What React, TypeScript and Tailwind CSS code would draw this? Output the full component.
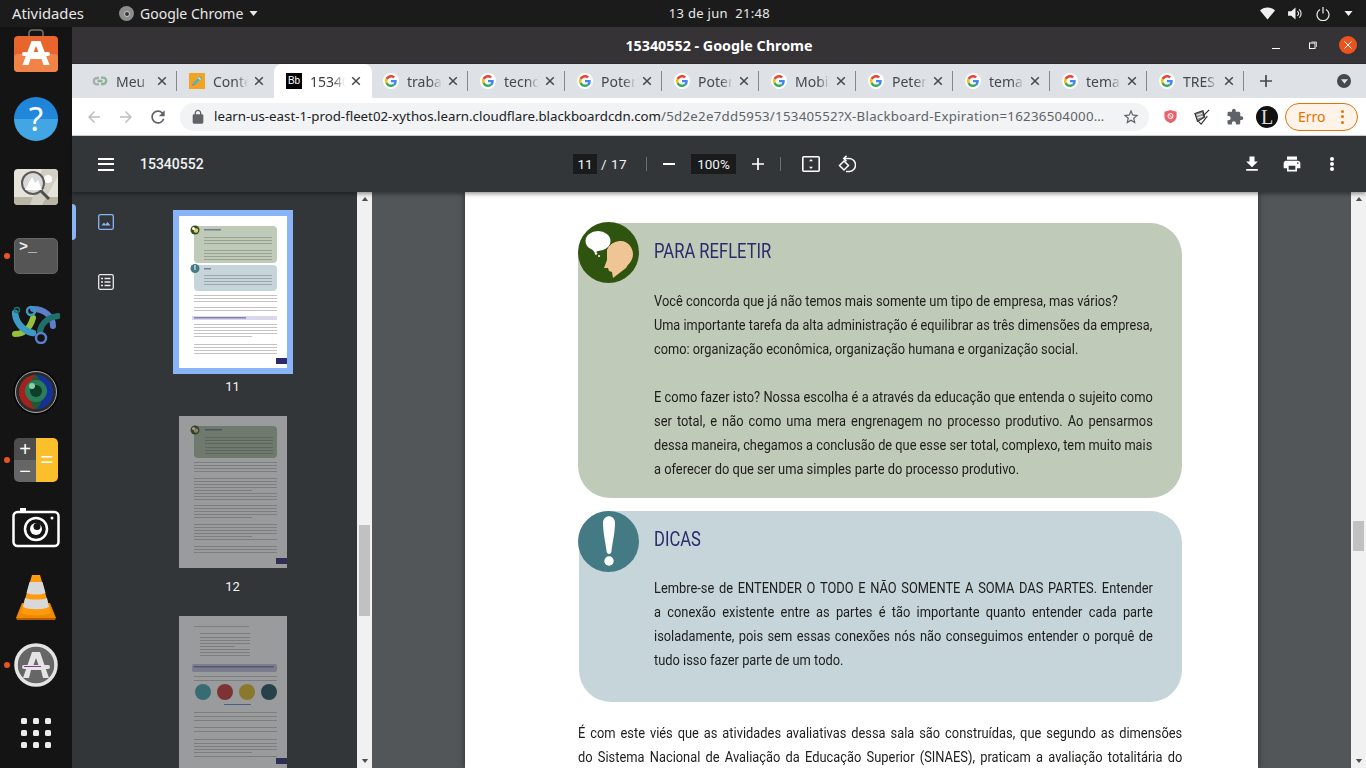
import React from "react";

const tabs = [
  { name: "Meu", icon: "link" },
  { name: "Conte", icon: "pencil" },
  { name: "15340", icon: "bb", active: true },
  { name: "trabal", icon: "g" },
  { name: "tecno", icon: "g" },
  { name: "Poten", icon: "g" },
  { name: "Poten", icon: "g" },
  { name: "Mobil", icon: "g" },
  { name: "Peter", icon: "g" },
  { name: "tema", icon: "g" },
  { name: "tema", icon: "g" },
  { name: "TRES", icon: "g" },
];

const GoogleIcon = () => (
  <div className="w-4 h-4 rounded-full bg-white flex items-center justify-center shrink-0">
    <svg viewBox="0 0 48 48" className="w-3 h-3">
      <path fill="#EA4335" d="M24 9.5c3.54 0 6.71 1.22 9.21 3.6l6.85-6.85C35.9 2.38 30.47 0 24 0 14.62 0 6.51 5.38 2.56 13.22l7.98 6.19C12.43 13.72 17.74 9.5 24 9.5z" />
      <path fill="#4285F4" d="M46.98 24.55c0-1.57-.15-3.09-.38-4.55H24v9.02h12.94c-.58 2.96-2.26 5.48-4.78 7.18l7.73 6c4.51-4.18 7.09-10.36 7.09-17.65z" />
      <path fill="#FBBC05" d="M10.53 28.59c-.48-1.45-.76-2.99-.76-4.59s.27-3.14.76-4.59l-7.98-6.19C.92 16.46 0 20.12 0 24c0 3.88.92 7.54 2.56 10.78l7.97-6.19z" />
      <path fill="#34A853" d="M24 48c6.48 0 11.93-2.13 15.89-5.81l-7.73-6c-2.15 1.45-4.92 2.3-8.16 2.3-6.26 0-11.57-4.22-13.47-9.91l-7.98 6.19C6.51 42.62 14.62 48 24 48z" />
    </svg>
  </div>
);

const TabIcon = ({ type }: { type: string }) => {
  if (type === "g") return <GoogleIcon />;
  if (type === "bb")
    return (
      <div className="w-4 h-4 bg-black text-white text-[10px] leading-4 text-center shrink-0 font-['Liberation_Sans',sans-serif]">
        Bb
      </div>
    );
  if (type === "pencil")
    return (
      <svg viewBox="0 0 16 16" className="w-4 h-4 shrink-0">
        <rect width="16" height="16" fill="#f2a31f" />
        <path d="M3 13l1-3 7-7 2 2-7 7z" fill="#4fb6c9" />
        <path d="M9.5 4.5l2 2" stroke="#e8e8e8" strokeWidth="1.2" />
        <path d="M3 13l1-3 2 2z" fill="#e66a7a" />
      </svg>
    );
  return (
    <svg viewBox="0 0 16 16" className="w-4 h-4 shrink-0" fill="none" stroke="#8fb39a" strokeWidth="2.4">
      <path d="M7 5H5a3.2 3.2 0 0 0 0 6.4h2" stroke="#a4b0a8" />
      <path d="M9 4.6h2a3.2 3.2 0 0 1 0 6.4H9M5.500 8h5" />
    </svg>
  );
};

const TabX = () => (
  <svg viewBox="0 0 10 10" className="w-[10px] h-[10px] shrink-0" stroke="#45494d" strokeWidth="1.500">
    <path d="M1.200 1.200l7.600 7.600M8.800 1.200l-7.600 7.600" />
  </svg>
);

const TopBar = () => (
  <div className="h-[27px] shrink-0 bg-[#1b1b1b] text-[#e8e8e8] text-[14px] flex items-center font-['Noto_Sans',sans-serif]">
    <span className="ml-3 w-[107px] text-[14.800px]">Atividades</span>
    <div className="w-[15px] h-[15px] rounded-full bg-[#8c8c8c] flex items-center justify-center">
      <div className="w-[6px] h-[6px] rounded-full bg-[#333] border border-[#ccc]" />
    </div>
    <span className="ml-[6px]">Google Chrome</span>
    <svg viewBox="0 0 8 5" className="w-[9px] h-[5px] ml-[6px]" fill="#e8e8e8">
      <path d="M0 0h8L4 5z" />
    </svg>
    <span className="ml-[401px] w-[120px] text-center text-[13px] tracking-[0.3px]">13 de jun&nbsp;&nbsp;21:48</span>
    <div className="ml-auto flex items-center mr-[13px] gap-[13px]">
      <svg viewBox="0 0 16 13" className="w-[15px] h-[13px]" fill="#f0f0f0">
        <path d="M8 13L0 3.200C2 1.200 4.800 0 8 0s6 1.200 8 3.200z" />
      </svg>
      <svg viewBox="0 0 16 14" className="w-[15px] h-[13px]" fill="none" stroke="#f0f0f0">
        <path d="M0 4.500h3.500L8 .5v13l-4.500-4H0z" fill="#f0f0f0" stroke="none" />
        <path d="M10 4.500a3 3 0 0 1 0 5M12 2.500a6 6 0 0 1 0 9" strokeWidth="1.200" />
      </svg>
      <svg viewBox="0 0 14 14" className="w-[14px] h-[14px]" fill="none" stroke="#f0f0f0" strokeWidth="1.200">
        <path d="M4 2.500a6 6 0 1 0 6 0M7 0v6.500" />
      </svg>
      <svg viewBox="0 0 8 5" className="w-[9px] h-[5px] ml-[1px]" fill="#f0f0f0">
        <path d="M0 0h8L4 5z" />
      </svg>
    </div>
  </div>
);

const DockIcon = ({ children, dot }: { children: React.ReactNode; dot?: boolean }) => (
  <div className="relative w-[72px] h-[44px] flex items-center justify-center">
    {dot && <div className="absolute left-[4px] top-[19px] w-[6px] h-[6px] rounded-full bg-[#e95420]" />}
    {children}
  </div>
);

const Dock = () => (
  <div className="w-[72px] shrink-0 bg-[#141414] pt-[2px] flex flex-col gap-[24.2px] overflow-hidden">
    <DockIcon>
      <svg viewBox="0 0 44 44" className="w-[44px] h-[44px]">
        <path d="M15 7V4a3 3 0 0 1 3-3h8a3 3 0 0 1 3 3v3" fill="none" stroke="#77716b" strokeWidth="1.500" />
        <rect x="0" y="7" width="44" height="36" rx="4" fill="#e8662d" />
        <rect x="0" y="25" width="44" height="18" rx="4" fill="#f08347" />
        <path d="M17.500 12h9l9 24h-6l-2-6h-11l-2 6h-6zM22 17l-3.500 9h7z" fill="#fff" />
        <rect x="8" y="23" width="28" height="4" rx="2" fill="#fff" />
      </svg>
    </DockIcon>
    <DockIcon>
      <div className="w-[44px] h-[44px] rounded-full bg-[linear-gradient(#1f83d8_0%,#2189dc_50%,#42a5e4_50%,#42a5e4_100%)] text-white text-[33px] leading-[44px] text-center font-['Noto_Sans',sans-serif]">
        ?
      </div>
    </DockIcon>
    <DockIcon>
      <svg viewBox="0 0 44 38" className="w-[44px] h-[38px]">
        <rect width="44" height="36" y="1" rx="4" fill="#e6e3da" />
        <path d="M0 29h44v4a4 4 0 0 1-4 4H4a4 4 0 0 1-4-4z" fill="#b9b4a4" />
        <path d="M28 1L16 37h12L44 8V5a4 4 0 0 0-4-4z" fill="#d2cfc4" />
        <circle cx="34" cy="11" r="4" fill="#fff" />
        <circle cx="19" cy="15" r="11" fill="#d9d9d9" stroke="#5a5a5a" strokeWidth="2" />
        <path d="M11 22l7-13 3 6 3-3 4 10z" fill="#fff" />
        <path d="M27 23l8 8" stroke="#4b4b4b" strokeWidth="3" />
      </svg>
    </DockIcon>
    <DockIcon dot>
      <div className="w-[44px] h-[36px] rounded-[5px] bg-[#555555] border border-[#666] text-[#eee] text-[15px] font-bold leading-[18px] pl-[4px] font-['Liberation_Mono',monospace]">
        &gt;_
      </div>
    </DockIcon>
    <DockIcon>
      <svg viewBox="0 0 48 40" className="w-[48px] h-[40px]" fill="none" strokeLinecap="round">
        <path d="M21 5c11 0 20 7 20 17" stroke="#5b7fc9" strokeWidth="6" />
        <path d="M28 27c2-9 9-14 18-15" stroke="#1f6f6b" strokeWidth="6" />
        <path d="M3 30c8 0 15-5 18-16" stroke="#95c13d" strokeWidth="6" />
        <path d="M3 9c1 10 8 18 18 20" stroke="#3c9bc4" strokeWidth="6.500" />
        <circle cx="19" cy="7" r="4" stroke="#3c9bc4" strokeWidth="2.500" />
        <circle cx="29" cy="34" r="5" stroke="#5b7fc9" strokeWidth="2.500" />
        <circle cx="5" cy="6" r="2.500" stroke="#1f6f6b" strokeWidth="1.500" />
      </svg>
    </DockIcon>
    <DockIcon>
      <svg viewBox="0 0 46 46" className="w-[46px] h-[46px]">
        <circle cx="23" cy="23" r="23" fill="#0a0a0a" />
        <circle cx="23" cy="23" r="20.500" fill="#2a2a2a" stroke="#aaa" strokeWidth="1" />
        <circle cx="23" cy="23" r="17" fill="#1c5a34" />
        <path d="M23 6a17 17 0 0 0 0 34c-8-4-10-26 0-34z" fill="#a3231c" />
        <path d="M23 6a17 17 0 0 1 0 34c8-4 10-26 0-34z" fill="#14309a" />
        <circle cx="23" cy="22" r="11" fill="#2a7d58" />
        <circle cx="23" cy="22" r="6" fill="#0d3f26" />
        <circle cx="19" cy="17" r="3" fill="#8fcfa6" />
      </svg>
    </DockIcon>
    <DockIcon dot>
      <div className="w-[44px] h-[44px] rounded-[5px] overflow-hidden flex">
        <div className="w-[22px] flex flex-col text-white text-[20px] leading-[22px] text-center font-['Liberation_Sans',sans-serif]">
          <div className="h-[22px] bg-[#4d4d4d]">+</div>
          <div className="h-[22px] bg-[#666666]">−</div>
        </div>
        <div className="w-[22px] bg-[#fbbf2c] text-white text-[22px] leading-[44px] text-center font-['Liberation_Sans',sans-serif]">=</div>
      </div>
    </DockIcon>
    <DockIcon>
      <svg viewBox="0 0 48 40" className="w-[48px] h-[40px]" fill="none" stroke="#fff">
        <path d="M8 0h6v4H8z" fill="#fff" stroke="none" />
        <rect x="1.500" y="4" width="45" height="34" rx="4" strokeWidth="2.500" />
        <circle cx="24" cy="21" r="11" strokeWidth="2.500" />
        <circle cx="24" cy="21" r="6" fill="#fff" stroke="none" />
        <circle cx="25" cy="18.500" r="3.500" fill="#141414" stroke="none" />
        <circle cx="40" cy="10" r="1.500" fill="#fff" stroke="none" />
      </svg>
    </DockIcon>
    <DockIcon>
      <svg viewBox="0 0 40 46" className="w-[40px] h-[46px]">
        <path d="M6 29L0 44h40l-6-15z" fill="#f08a00" />
        <path d="M0 44h40l-1 2H1z" fill="#b95d00" />
        <path d="M16 1h8l11 38c-5 3-25 3-30 0z" fill="#ff9a0d" />
        <path d="M13.500 8h13l3 11c-5 2-14 2-19 0z" fill="#d8d8d8" />
        <path d="M9 24c5 2 17 2 22 0l2 9c-6 3-20 3-26 0z" fill="#d8d8d8" />
      </svg>
    </DockIcon>
    <DockIcon dot>
      <svg viewBox="0 0 44 44" className="w-[44px] h-[44px]">
        <circle cx="22" cy="22" r="20" fill="#666" stroke="#e4e4e4" strokeWidth="3.500" />
        <path d="M18 9h8l9 26h-6l-2-8H17l-2 8H9zM22 15l-3.500 10h7z" fill="#e4e4e4" />
        <rect x="8" y="22" width="28" height="4" rx="2" fill="#e4e4e4" />
        <path d="M10 23.500h17" stroke="#8c3a93" strokeWidth="1" />
      </svg>
    </DockIcon>
    <DockIcon>
      <div className="grid grid-cols-3 gap-[6px]">
        {Array.from({ length: 9 }).map((_, i) => (
          <div key={i} className="w-[6px] h-[6px] rounded-[1.500px] bg-[#ececec]" />
        ))}
      </div>
    </DockIcon>
  </div>
);

const TitleBar = () => (
  <div className="h-[36px] shrink-0 bg-[#353335] flex items-center relative font-['Noto_Sans',sans-serif] pt-[1px]">
    <span className="flex-1 text-center text-white text-[14.300px] font-bold">15340552 - Google Chrome</span>
    <div className="absolute right-[9px] top-[9px] flex items-center">
      <div className="w-[8px] h-px bg-white mt-[6px] mr-[29px]" />
      <svg viewBox="0 0 8 8" className="w-[8px] h-[8px] mr-[22px]" fill="none" stroke="#fff">
        <rect x="0.500" y="2" width="5.500" height="5.500" />
        <path d="M2.500 1h5v5" strokeOpacity="0.7" />
      </svg>
      <div className="w-[18px] h-[18px] rounded-full bg-[#e9541f] flex items-center justify-center">
        <svg viewBox="0 0 8 8" className="w-[8px] h-[8px]" stroke="#fff" strokeWidth="1">
          <path d="M.5.5l7 7M7.500.5l-7 7" />
        </svg>
      </div>
    </div>
  </div>
);

const TabStrip = () => (
  <div className="h-[35px] shrink-0 bg-[#dee1e6] flex items-stretch pl-[12px] relative font-['Noto_Sans',sans-serif] border-t border-[#2a2a2a]">
    {tabs.map((tab, i) => (
      <div
        key={i}
        className={`shrink-0 flex items-center relative text-[14px] ${
          tab.active
            ? "w-[98px] ml-[-4px] mr-[3px] pl-[12px] bg-white rounded-t-lg text-[#3c4043]"
            : "w-[97px] pl-[8px] text-[#45494d]"
        }`}
      >
        <TabIcon type={tab.icon} />
        <span className="ml-[8px] w-[35px] overflow-hidden whitespace-nowrap [mask-image:linear-gradient(to_right,black_65%,transparent)]">
          {tab.name}
        </span>
        <span className="ml-[6px]">
          <TabX />
        </span>
        {!tab.active && i !== 1 && <div className="absolute right-[4px] top-[7px] h-[20px] w-px bg-[#84888c]" />}
      </div>
    ))}
    <svg viewBox="0 0 12 12" className="w-[12px] h-[12px] self-center ml-[12px]" stroke="#45494d" strokeWidth="1.700">
      <path d="M6 0v12M0 6h12" />
    </svg>
    <div className="absolute right-[15px] top-[10px] w-[14px] h-[14px] rounded-full bg-[#45494d] flex items-center justify-center">
      <svg viewBox="0 0 8 5" className="w-[7px] h-[5px]" fill="#dee1e6">
        <path d="M0 0h8L4 5z" />
      </svg>
    </div>
  </div>
);

const BrowserToolbar = () => (
  <div className="h-[38px] shrink-0 bg-white flex items-center font-['Noto_Sans',sans-serif] border-b border-[#d6d7d9]">
    <svg viewBox="0 0 24 24" className="w-[18px] h-[18px] ml-[13px]" fill="#bcbec1">
      <path d="M20 11H7.830l5.590-5.590L12 4l-8 8 8 8 1.410-1.410L7.830 13H20v-2z" />
    </svg>
    <svg viewBox="0 0 24 24" className="w-[18px] h-[18px] ml-[14px]" fill="#bcbec1">
      <path d="M12 4l-1.410 1.410L16.170 11H4v2h12.170l-5.580 5.590L12 20l8-8z" />
    </svg>
    <svg viewBox="0 0 24 24" className="w-[20px] h-[20px] ml-[13px]" fill="#5f6368">
      <path d="M17.650 6.350A7.958 7.958 0 0 0 12 4c-4.420 0-7.990 3.580-7.990 8s3.570 8 7.990 8c3.730 0 6.840-2.550 7.730-6h-2.080A5.990 5.990 0 0 1 12 18c-3.310 0-6-2.690-6-6s2.690-6 6-6c1.660 0 3.140.690 4.220 1.780L13 11h7V4l-2.350 2.350z" />
    </svg>
    <div className="ml-[12px] w-[969px] h-[28px] rounded-full bg-[#f1f3f4] flex items-center pl-[10px] pr-[9px]">
      <svg viewBox="0 0 24 24" className="w-[16px] h-[16px] shrink-0" fill="#5f6368">
        <path d="M18 8h-1V6c0-2.760-2.240-5-5-5S7 3.240 7 6v2H6c-1.100 0-2 .9-2 2v10c0 1.100.9 2 2 2h12c1.100 0 2-.9 2-2V10c0-1.100-.9-2-2-2zM9 6c0-1.660 1.340-3 3-3s3 1.340 3 3v2H9V6z" />
      </svg>
      <span className="ml-[8px] w-[900px] text-[13.280px] whitespace-nowrap overflow-hidden text-[#202124]">
        learn-us-east-1-prod-fleet02-xythos.learn.cloudflare.blackboardcdn.com
        <span className="text-[#5f6368] tracking-[0.27px]">/5d2e2e7dd5953/15340552?X-Blackboard-Expiration=16236504000…</span>
      </span>
      <svg viewBox="0 0 24 24" className="w-[18px] h-[18px] ml-auto shrink-0" fill="#5f6368">
        <path d="M22 9.240l-7.190-.62L12 2 9.190 8.630 2 9.240l5.460 4.730L5.820 21 12 17.270 18.180 21l-1.630-7.030L22 9.240zM12 15.400l-3.760 2.270 1-4.280-3.320-2.880 4.380-.38L12 6.100l1.710 4.040 4.380.38-3.320 2.880 1 4.280L12 15.400z" />
      </svg>
    </div>
    <svg viewBox="0 0 16 16" className="w-[15px] h-[15px] ml-[14px]">
      <path d="M8 1l6.500 2v5c0 3.500-3 6-6.500 7-3.500-1-6.500-3.500-6.500-7V3z" fill="#e8636c" />
      <circle cx="8" cy="7.500" r="2.700" fill="none" stroke="#fff" strokeWidth="1" />
      <path d="M6 5.500l4 4" stroke="#fff" strokeWidth="1" />
    </svg>
    <svg viewBox="0 0 18 18" className="w-[16px] h-[16px] ml-[16px]" fill="none" stroke="#333" strokeWidth="1.300">
      <path d="M1 5l9-3 2 7-8 5z" fill="#888" />
      <path d="M5 14l3 3 7-9M9 9l8-8" />
      <path d="M3 7l6-2M4 10l6-2" stroke="#eee" />
    </svg>
    <svg viewBox="0 0 24 24" className="w-[18px] h-[18px] ml-[16px]" fill="#5f6368">
      <path d="M20.500 11H19V7c0-1.100-.9-2-2-2h-4V3.500C13 2.120 11.880 1 10.500 1S8 2.120 8 3.500V5H4c-1.100 0-1.990.9-1.990 2v3.800H3.500c1.490 0 2.700 1.210 2.700 2.700s-1.210 2.700-2.700 2.700H2V20c0 1.100.9 2 2 2h3.800v-1.500c0-1.490 1.210-2.700 2.700-2.700 1.490 0 2.700 1.210 2.700 2.700V22H17c1.100 0 2-.9 2-2v-4h1.500c1.380 0 2.500-1.120 2.500-2.500S21.880 11 20.500 11z" />
    </svg>
    <div className="ml-[12px] w-[22px] h-[22px] rounded-full bg-[#111] text-[#ddd] text-[20px] leading-[22px] text-center font-['Liberation_Serif',serif]">
      L
    </div>
    <div className="ml-[7px] w-[73px] h-[28px] rounded-full border border-[#e37400] bg-[#fdf3e8] flex items-center pl-[12px] text-[#e37400] text-[14px]">
      <span>Erro</span>
      <div className="ml-[15px] flex flex-col gap-[2.500px]">
        <div className="w-[3px] h-[3px] rounded-full bg-[#e37400]" />
        <div className="w-[3px] h-[3px] rounded-full bg-[#e37400]" />
        <div className="w-[3px] h-[3px] rounded-full bg-[#e37400]" />
      </div>
    </div>
  </div>
);

const PdfToolbar = () => (
  <div className="h-[56px] shrink-0 bg-[#323639] flex items-center text-[#f1f3f4] text-[14px] font-['Roboto',sans-serif] shadow-[0_2px_4px_rgba(0,0,0,0.4)] relative z-10">
    <div className="w-[501px] shrink-0 flex items-center pl-[26px]">
      <div className="w-[16px] flex flex-col gap-[3.500px]">
        <div className="h-[2px] bg-white" />
        <div className="h-[2px] bg-white" />
        <div className="h-[2px] bg-white" />
      </div>
      <span className="ml-[26px] font-medium">15340552</span>
    </div>
    <div className="w-[24px] h-[20px] bg-[#191b1c] text-center leading-[20px] text-[13.500px]">11</div>
    <span className="ml-[4px] w-[24px] text-[13.500px] tracking-[0.5px] whitespace-nowrap">/ 17</span>
    <div className="ml-[21px] w-px h-[14px] bg-[#6c6f72]" />
    <div className="ml-[16px] w-[12px] h-[2px] bg-white" />
    <div className="ml-[16px] w-[45px] h-[20px] bg-[#191b1c] text-center leading-[20px] text-[13.500px]">100%</div>
    <svg viewBox="0 0 12 12" className="ml-[16px] w-[12px] h-[12px]" stroke="#fff" strokeWidth="1.700">
      <path d="M6 0v12M0 6h12" />
    </svg>
    <div className="ml-[16px] w-px h-[14px] bg-[#6c6f72]" />
    <svg viewBox="0 0 18 16" className="ml-[21px] w-[18px] h-[16px]" fill="none" stroke="#fff" strokeWidth="1.600">
      <rect x="0.800" y="0.800" width="16.400" height="14.400" rx="1" />
      <path d="M9 3l-2 2.200h4zM9 13l-2-2.200h4z" fill="#fff" stroke="none" />
    </svg>
    <svg viewBox="0 0 18 18" className="ml-[18px] w-[18px] h-[18px]" fill="none" stroke="#fff" strokeWidth="1.500">
      <path d="M1.500 10.500l4.500-4.500 4.500 4.500-4.500 4.500z" />
      <path d="M6 3.500h4.500a6.500 6.500 0 0 1 1 13H8" />
      <path d="M8.500 .8L5.800 3.500l2.700 2.700" />
    </svg>
    <div className="ml-auto flex items-center pr-[32px]">
      <svg viewBox="0 0 24 24" className="w-[20px] h-[20px]" fill="#fff">
        <path d="M19 9h-4V3H9v6H5l7 7 7-7zM5 18v2h14v-2H5z" />
      </svg>
      <svg viewBox="0 0 24 24" className="w-[20px] h-[20px] ml-[20px]" fill="#fff">
        <path d="M19 8H5c-1.660 0-3 1.340-3 3v6h4v4h12v-4h4v-6c0-1.660-1.340-3-3-3zm-3 11H8v-5h8v5zm3-7c-.55 0-1-.45-1-1s.45-1 1-1 1 .45 1 1-.45 1-1 1zm-1-9H6v4h12V3z" />
      </svg>
      <div className="ml-[28px] flex flex-col gap-[1px]">
        <div className="w-[4px] h-[4px] rounded-full bg-white" />
        <div className="w-[4px] h-[4px] rounded-full bg-white" />
        <div className="w-[4px] h-[4px] rounded-full bg-white" />
      </div>
    </div>
  </div>
);

// linhas de texto da miniatura
const lineRects = (rows: number[], x: number, w: number, color = "#444", op = 0.32) =>
  rows.map((y, i) => <rect key={`${y}-${i}`} x={x} y={y} width={i % 5 === 4 ? w * 0.7 : w} height="1" fill={color} opacity={op} />);

const HeadIcon = ({ cy }: { cy: number }) => (
  <>
    <circle cx="16" cy={cy} r="4.500" fill="#2f5410" />
    <circle cx="17" cy={cy + 0.5} r="2.200" fill="#efc596" />
    <circle cx="14.500" cy={cy - 1.5} r="1.500" fill="#fff" />
  </>
);

const ThumbOne = () => (
  <svg viewBox="0 0 108 152" className="w-[108px] h-[152px] block bg-white">
    <g className="blur-[0.3px]">
      <rect x="15" y="10" width="83" height="37" rx="4" fill="#c0cab8" />
      <HeadIcon cy={14} />
      <rect x="25" y="13" width="17" height="1.500" fill="#2b2a6b" opacity="0.5" />
      {lineRects([21, 24, 27], 25, 68)}
      {lineRects([34, 37, 40, 43], 25, 68)}
      <rect x="15" y="49" width="83" height="26" rx="4" fill="#c5d5da" />
      <circle cx="16" cy="52.500" r="4.500" fill="#437a84" />
      <rect x="15.500" y="49" width="1" height="5" fill="#fff" />
      <rect x="25" y="52" width="7" height="1.500" fill="#2b2a6b" opacity="0.5" />
      {lineRects([59, 62, 65, 68], 25, 68)}
      {lineRects([79, 82, 85], 15, 83)}
      {lineRects([91, 94], 15, 83)}
      <rect x="13" y="100" width="85" height="4" fill="#d9d7ea" />
      <rect x="15" y="101" width="52" height="1.500" fill="#4a4890" opacity="0.6" />
      {lineRects([108, 111, 114, 117, 120], 15, 83)}
      {lineRects([128, 131, 134, 137], 15, 83)}
      <rect x="97" y="142" width="11" height="6" fill="#2b2a6b" />
    </g>
  </svg>
);

const ThumbTwo = () => (
  <svg viewBox="0 0 108 152" className="w-[108px] h-[152px] block bg-white">
    <g className="blur-[0.3px]">
      <rect x="15" y="10" width="83" height="32" rx="4" fill="#aebca3" />
      <HeadIcon cy={14} />
      <rect x="26" y="13" width="17" height="1.500" fill="#2b2a6b" opacity="0.5" />
      {lineRects([21, 24, 27], 26, 68)}
      {lineRects([31, 34, 37], 26, 68)}
      {lineRects([46, 49, 52, 55], 15, 83)}
      {lineRects([62, 65, 68, 71, 74, 77, 80, 83], 15, 83)}
      {lineRects([89, 92, 95, 98, 101], 15, 83)}
      {lineRects([108, 111, 114, 117, 120, 123], 15, 83)}
      {lineRects([130, 133, 136], 15, 83)}
      <rect x="97" y="142" width="11" height="6" fill="#2b2a6b" />
    </g>
  </svg>
);

const ThumbThree = () => (
  <svg viewBox="0 0 108 152" className="w-[108px] h-[152px] block bg-white">
    <g className="blur-[0.3px]">
      <rect x="15" y="10" width="55" height="1" fill="#444" opacity="0.32" />
      {lineRects([17, 21, 24, 27, 30, 33, 36, 39], 21, 50)}
      <rect x="13" y="48" width="85" height="8" rx="2" fill="#c3c1de" />
      <rect x="15" y="50" width="80" height="1.500" fill="#4a4890" opacity="0.6" />
      {lineRects([60, 64], 15, 83)}
      <circle cx="24" cy="76" r="8" fill="#3ea3ad" />
      <circle cx="46" cy="76" r="8" fill="#c8302f" />
      <circle cx="68" cy="76" r="8" fill="#e2bb20" />
      <circle cx="90" cy="76" r="8" fill="#1f4a5c" />
      <rect x="45" y="88" width="27" height="1" fill="#3050b0" opacity="0.7" />
      {lineRects([96, 100, 104], 15, 83)}
      {lineRects([111, 115], 15, 83)}
      {lineRects([123, 127, 130, 133, 136, 140], 15, 83)}
      <rect x="97" y="142" width="11" height="6" fill="#2b2a6b" />
    </g>
  </svg>
);

const Sidebar = () => (
  <div className="w-[285px] shrink-0 bg-[#323639] flex relative overflow-hidden font-['Roboto',sans-serif]">
    <div className="absolute left-0 top-[12px] w-[4px] h-[36px] rounded-r bg-[#8ab4f8]" />
    <div className="w-[68px] shrink-0 flex flex-col items-center pt-[22px] gap-[44px]">
      <svg viewBox="0 0 16 16" className="w-[16px] h-[16px]" fill="none" stroke="#8ab4f8" strokeWidth="1.300">
        <rect x="0.700" y="0.700" width="14.600" height="14.600" rx="1.500" />
        <path d="M3.500 11.500l2.500-3 1.500 2 2-2.500 3 3.500z" fill="#8ab4f8" stroke="none" />
      </svg>
      <svg viewBox="0 0 16 16" className="w-[16px] h-[16px]" fill="none" stroke="#e8eaed" strokeWidth="1.300">
        <rect x="0.700" y="0.700" width="14.600" height="14.600" rx="1.500" />
        <path d="M6.500 4.500h6M6.500 8h6M6.500 11.500h6" strokeWidth="1.500" />
        <path d="M3 4.500h2M3 8h2M3 11.500h2" strokeWidth="1.500" />
      </svg>
    </div>
    <div className="flex-1 pr-[32px] pt-[18px] flex flex-col items-center text-[13px] text-[#f1f3f4]">
      <div className="border-[6px] border-[#8ab4f8]">
        <ThumbOne />
      </div>
      <div className="h-[43px] pt-[3px] leading-[20px]">11</div>
      <div className="opacity-50">
        <ThumbTwo />
      </div>
      <div className="h-[49px] pt-[9px] leading-[20px]">12</div>
      <div className="opacity-50">
        <ThumbThree />
      </div>
    </div>
  </div>
);

const ScrollBar = ({ spacer, thumb }: { spacer: string; thumb: string }) => (
  <div className="w-[15px] shrink-0 bg-[#f1f1f1] flex flex-col items-center relative">
    <svg viewBox="0 0 8 5" className="w-[8px] h-[4px] absolute top-[5px] left-[3.500px]" fill="#505050">
      <path d="M4 0l4 5H0z" />
    </svg>
    <div className={`${spacer} shrink-0`} />
    <div className={`${thumb} w-[11px] bg-[#c1c1c1] shrink-0`} />
    <svg viewBox="0 0 8 5" className="w-[8px] h-[4px] absolute bottom-[5px] left-[3.500px]" fill="#505050">
      <path d="M0 0h8L4 5z" />
    </svg>
  </div>
);

// a fonte condensada do PDF nao existe aqui: Roboto apertado em x
const Line = ({ children }: { children: React.ReactNode }) => (
  <div className="h-[24px] leading-[24px] whitespace-nowrap origin-left scale-x-[0.83]">{children}</div>
);

const Just = ({ children, className = "w-[601px] scale-x-[0.83]" }: { children: React.ReactNode; className?: string }) => (
  <div className={`h-[24px] leading-[24px] origin-left text-justify [text-align-last:justify] ${className}`}>{children}</div>
);

const Heading = ({ children }: { children: React.ReactNode }) => (
  <h2 className="text-[21px] leading-[24px] text-[#2b2a6b] origin-left scale-x-[0.79]">{children}</h2>
);

const PageContent = () => (
  <div className="flex-1 bg-[#525659] overflow-hidden flex justify-center min-w-0">
    <div className="w-[793px] shrink-0 bg-white shadow-[0_0_6px_rgba(0,0,0,0.5)] pl-[113px] pr-[76px] pt-[31px] text-[15.500px] text-[#1d1d1b] font-['Roboto',sans-serif]">
      <section className="relative bg-[#c0cab8] rounded-[32px] pl-[76px] pr-[30px] pt-[16px] pb-[17px]">
        <svg viewBox="0 0 61 61" className="absolute left-0 top-[-1px] w-[61px] h-[61px]">
          <circle cx="30.500" cy="30.500" r="30.500" fill="#2f5410" />
          <path d="M29 28C32 21 38 19 43 19C50 19 55 26 55 32C55 39 50 42 48 46L35 56L34 50L31 49L30 46L26 46L29 38Z" fill="#efc596" />
          <ellipse cx="20" cy="19" rx="12.500" ry="10" fill="#fff" />
          <path d="M14 27l3 4 4-3z" fill="#fff" />
          <circle cx="18" cy="31.500" r="1.300" fill="#fff" />
          <circle cx="21" cy="34" r="1" fill="#fff" />
        </svg>
        <Heading>PARA REFLETIR</Heading>
        <div className="mt-[26px]">
          <Line>Você concorda que já não temos mais somente um tipo de empresa, mas vários?</Line>
          <Just className="w-[609px] scale-x-[0.818]">Uma importante tarefa da alta administração é equilibrar as três dimensões da empresa,</Just>
          <div className="h-[24px] leading-[24px] whitespace-nowrap origin-left scale-x-[0.826]">como: organização econômica, organização humana e organização social.</div>
          <div className="h-[24px]" />
          <Just>E como fazer isto? Nossa escolha é a através da educação que entenda o sujeito como</Just>
          <Just>ser total, e não como uma mera engrenagem no processo produtivo. Ao pensarmos</Just>
          <Just className="w-[604px] scale-x-[0.825]">dessa maneira, chegamos a conclusão de que esse ser total, complexo, tem muito mais</Just>
          <Line>a oferecer do que ser uma simples parte do processo produtivo.</Line>
        </div>
      </section>
      <section className="relative mt-[13px] bg-[#c5d5da] rounded-[32px] pl-[75px] pr-[30px] pt-[16px] pb-[30px] ml-[1px]">
        <svg viewBox="0 0 61 61" className="absolute left-[-1px] top-0 w-[61px] h-[61px]">
          <circle cx="30.500" cy="30.500" r="30.500" fill="#437a84" />
          <path d="M25 12C25 3 37 3 37 12C37 22 34 34 33.500 40C33 44 29 44 28.500 40C28 34 25 22 25 12Z" fill="#fff" />
          <circle cx="31" cy="50" r="4.700" fill="#fff" />
        </svg>
        <Heading>DICAS</Heading>
        <div className="mt-[25px]">
          <Just>Lembre-se de ENTENDER O TODO E NÃO SOMENTE A SOMA DAS PARTES. Entender</Just>
          <Just>a conexão existente entre as partes é tão importante quanto entender cada parte</Just>
          <Just>isoladamente, pois sem essas conexões nós não conseguimos entender o porquê de</Just>
          <Line>tudo isso fazer parte de um todo.</Line>
        </div>
      </section>
      <div className="mt-[19px]">
        <Just className="w-[728px] scale-x-[0.83]">É com este viés que as atividades avaliativas dessa sala são construídas, que segundo as dimensões</Just>
        <Just className="w-[728px] scale-x-[0.83]">do Sistema Nacional de Avaliação da Educação Superior (SINAES), praticam a avaliação totalitária do</Just>
      </div>
    </div>
  </div>
);

export default function App() {
  return (
    <div className="w-[1366px] h-[768px] overflow-hidden flex flex-col bg-[#141414]">
      <TopBar />
      <div className="flex-1 flex min-h-0">
        <Dock />
        <div className="flex-1 flex flex-col min-w-0">
          <TitleBar />
          <TabStrip />
          <BrowserToolbar />
          <PdfToolbar />
          <div className="flex-1 flex min-h-0">
            <Sidebar />
            <ScrollBar spacer="h-[333px]" thumb="h-[91px]" />
            <PageContent />
            <ScrollBar spacer="h-[329px]" thumb="h-[30px]" />
          </div>
        </div>
      </div>
    </div>
  );
}
